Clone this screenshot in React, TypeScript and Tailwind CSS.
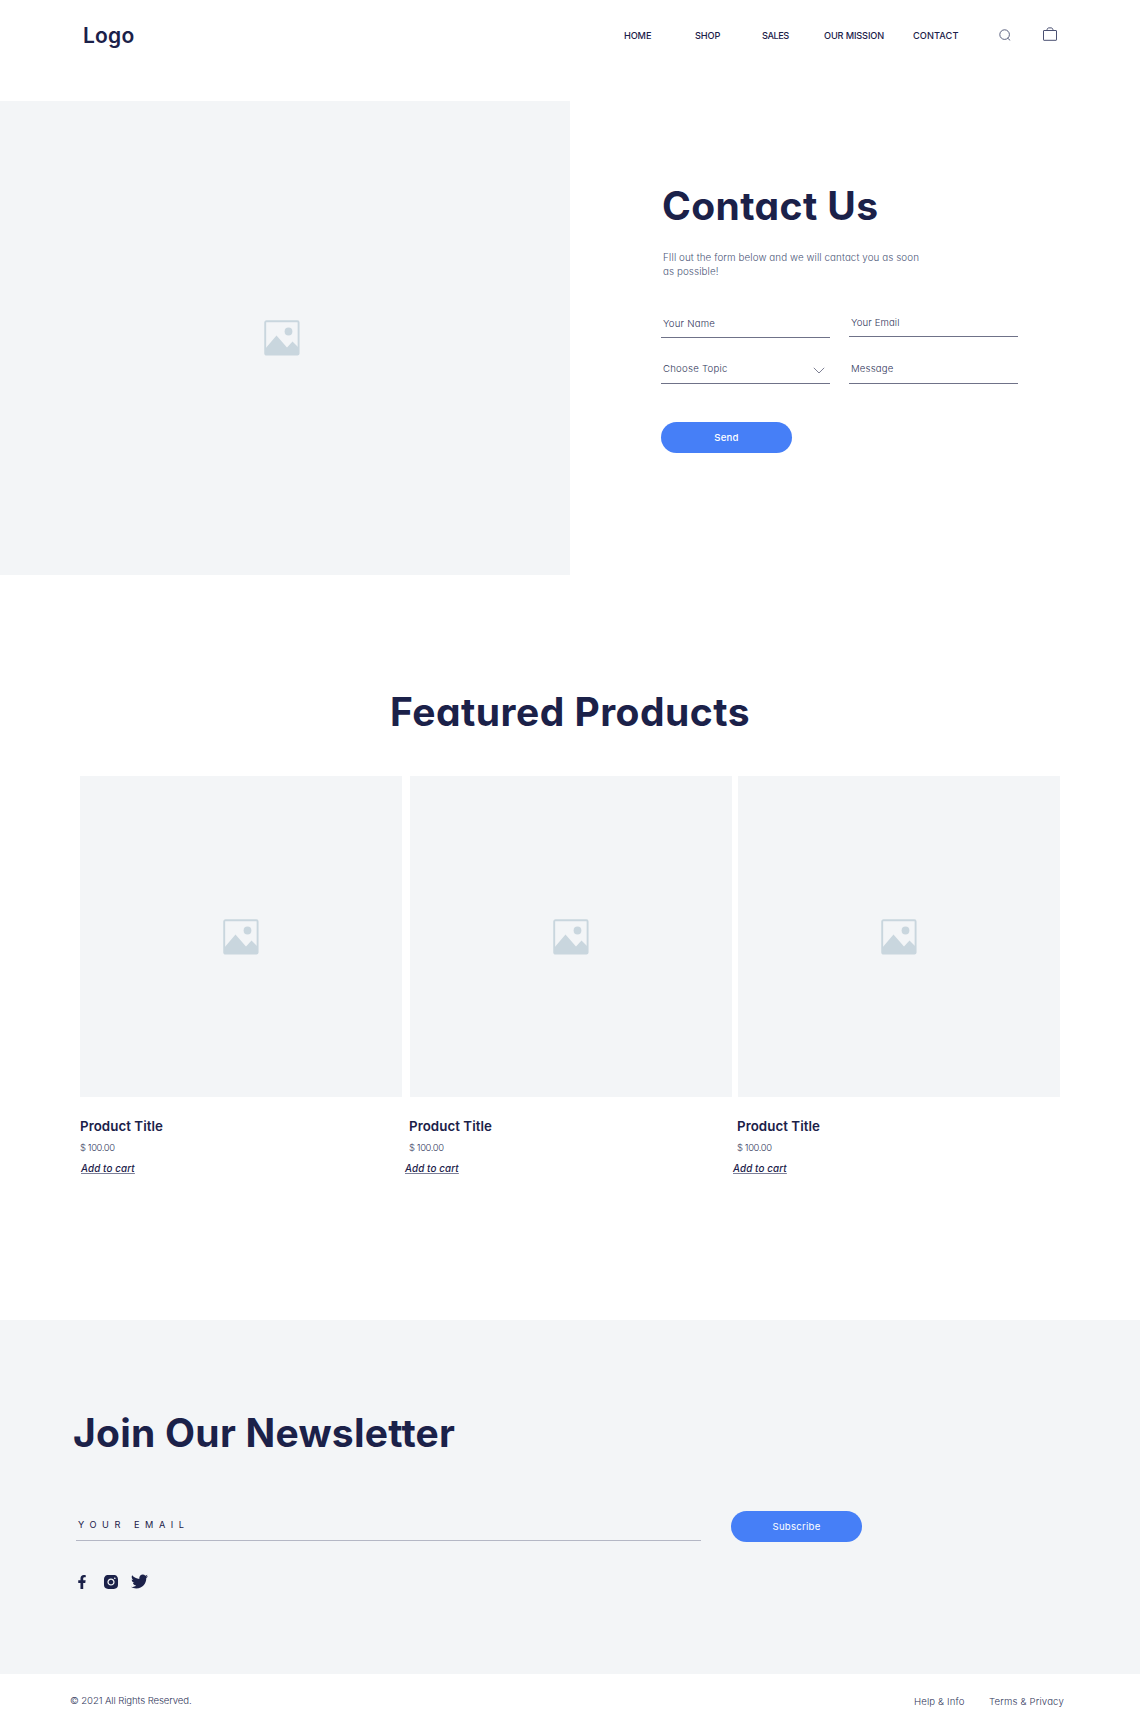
import { FaFacebookF, FaTwitter } from 'react-icons/fa';
import { AiFillInstagram } from 'react-icons/ai';

const navItems = [
  { label: 'HOME', className: 'w-[71px] tracking-[-0.13px]' },
  { label: 'SHOP', className: 'w-[67px] tracking-[-0.1px]' },
  { label: 'SALES', className: 'w-[62px] tracking-[-0.45px]' },
  { label: 'OUR MISSION', className: 'w-[89px] tracking-[-0.14px]' },
  { label: 'CONTACT', className: 'w-[87px] tracking-[0.09px]' },
];

const products = [
  { id: 1, title: 'Product Title', price: '$ 100.00', inset: '', link: 'ml-px' },
  { id: 2, title: 'Product Title', price: '$ 100.00', inset: '-ml-px', link: '-ml-[5px]' },
  { id: 3, title: 'Product Title', price: '$ 100.00', inset: '-ml-px', link: '-ml-[5px]' },
];

function Placeholder() {
  return (
    <svg width="36" height="36" viewBox="0 0 36 36" fill="none">
      <rect x="1.2" y="1.2" width="33.4" height="33.4" rx="1.2" stroke="#c9d6de" strokeWidth="1.9" />
      <path d="M1 29 L12.5 15.5 L23 27.5 L28.5 21.5 L34.5 27.5 V34.6 H1 Z" fill="#c9d6de" />
      <circle cx="24.5" cy="11.5" r="3.9" fill="#c9d6de" />
    </svg>
  );
}

function Header() {
  return (
    <header className="flex h-[70px] items-center pl-[83px]">
      <div className="mt-px w-[541px] text-[21px] font-semibold leading-6 tracking-[0.22px]">Logo</div>
      <nav className="mt-px flex text-[9.2px] font-medium leading-4">
        {navItems.map((item) => (
          <a key={item.label} href="#" className={item.className}>
            {item.label}
          </a>
        ))}
      </nav>
      <svg className="-ml-px" width="12" height="12" viewBox="0 0 12 12" fill="none" stroke="#4a5072" strokeWidth="0.9">
        <circle cx="5.6" cy="5.6" r="4.8" />
        <path d="M8.7 9.2 L11.2 11.4" />
      </svg>
      <svg className="-mt-[2px] ml-[31px]" width="16" height="14" viewBox="0 0 16 14" fill="none" stroke="#4a5072" strokeWidth="1">
        <rect x="1.5" y="3.5" width="13" height="9.8" rx="0.4" />
        <path d="M5 3.5 C5 1.6 5.8 0.9 7 0.9 H9 C10.2 0.9 11 1.6 11 3.5" />
      </svg>
    </header>
  );
}

function Contact() {
  return (
    <section className="mt-[31px] flex h-[474px]">
      <div className="flex w-[570px] items-center justify-center bg-[#f3f5f7] pr-[6px]">
        <Placeholder />
      </div>
      <div className="pl-[91px] pt-[81px]">
        <h1 className="pl-px text-[39px] font-bold leading-[48px] tracking-[0.4px]">Contact Us</h1>
        <p className="mt-[21px] pl-[2px] text-[9.8px] font-light leading-[14px] tracking-[0.09px] text-[#4c5678]">
          FIll out the form below and we will cantact you as soon
          <br />
          as possible!
        </p>
        <form className="text-[9.6px] font-light leading-[18px] text-[#32375b]">
          <div className="mt-[35px] grid grid-cols-[169px_169px] gap-x-[19px] gap-y-[22px]">
            <div className="mt-px border-b border-[#6f7288] pb-[4px] pl-[2px] tracking-[0.21px]">Your Name</div>
            <div className="mb-px border-b border-[#6f7288] pb-[4px] pl-[2px] tracking-[0.1px]">Your Email</div>
            <div className="flex items-center justify-between border-b border-[#6f7288] pb-[5px] pl-[2px] pr-[5px] tracking-[0.24px]">
              Choose Topic
              <svg className="mt-[3px]" width="12" height="7" viewBox="0 0 12 7" fill="none" stroke="#6f7288" strokeWidth="0.9">
                <path d="M0.8 0.8 L6 6 L11.2 0.8" />
              </svg>
            </div>
            <div className="border-b border-[#6f7288] pb-[5px] pl-[2px] tracking-[0.18px]">Message</div>
          </div>
          <button type="button" className="mt-[37.5px] block h-[31px] w-[131px] rounded-full bg-[#467ff7] pt-px font-medium tracking-[0.24px] text-white">
            Send
          </button>
        </form>
      </div>
    </section>
  );
}

function Featured() {
  return (
    <section className="h-[745px] pt-[113px]">
      <h2 className="text-center text-[39px] font-bold leading-[48px] tracking-[0.48px]">Featured Products</h2>
      <div className="mt-10 grid grid-cols-[330px_328px_322px] pl-20">
        {products.map((product) => (
          <article key={product.id}>
            <div className="flex h-[321px] w-[322px] items-center justify-center bg-[#f3f5f7]">
              <Placeholder />
            </div>
            <h3 className={`mt-[19px] text-[13.3px] font-semibold leading-5 tracking-[0.06px] ${product.inset}`}>{product.title}</h3>
            <p className={`mt-[4.5px] text-[9.4px] font-light leading-[14px] tracking-[-0.36px] text-[#32375b] ${product.inset}`}>
              {product.price}
            </p>
            <a
              href="#"
              className={`mt-[7px] block text-[9.8px] font-medium italic leading-[14px] tracking-[0.13px] underline decoration-[#7c7f98] decoration-1 underline-offset-[1px] ${product.link}`}
            >
              Add to cart
            </a>
          </article>
        ))}
      </div>
    </section>
  );
}

function Newsletter() {
  return (
    <section className="h-[354px] bg-[#f3f5f7] pt-[89px]">
      <h2 className="pl-[73px] text-[39px] font-bold leading-[48px] tracking-[0.25px]">Join Our Newsletter</h2>
      <div className="mt-[54px] flex pl-[76px]">
        <div className="mt-1 h-[26px] w-[625px] border-b border-[#b4b7c5] pl-[2px] text-[9.2px] leading-[19px] tracking-[5.55px]">
          YOUR EMAIL
        </div>
        <button type="button" className="ml-[30px] h-[31px] w-[131px] rounded-full bg-[#467ff7] text-[9.6px] leading-[18px] tracking-[0.24px] text-white">
          Subscribe
        </button>
      </div>
      <div className="mt-8 flex h-[15px] items-center pl-[78px]">
        <FaFacebookF size={14} className="-ml-[3px]" />
        <AiFillInstagram size={18} className="ml-[13px]" />
        <FaTwitter size={17} className="ml-[11px]" />
      </div>
    </section>
  );
}

function Footer() {
  return (
    <footer className="flex h-[49px] items-start pl-[70px] pt-[18px] text-[9.6px] font-light leading-[18px] text-[#32375b]">
      <span className="w-[844px] tracking-[-0.1px]">© 2021 All Rights Reserved.</span>
      <a href="#" className="mt-px w-[75px] tracking-[0.14px]">Help &amp; Info</a>
      <a href="#" className="mt-px tracking-[0.17px]">Terms &amp; Privacy</a>
    </footer>
  );
}

export default function App() {
  return (
    <div className="w-[1140px] whitespace-nowrap bg-white font-['Inter',sans-serif] text-[#1b2149] [font-feature-settings:'cv11']">
      <Header />
      <Contact />
      <Featured />
      <Newsletter />
      <Footer />
    </div>
  );
}
